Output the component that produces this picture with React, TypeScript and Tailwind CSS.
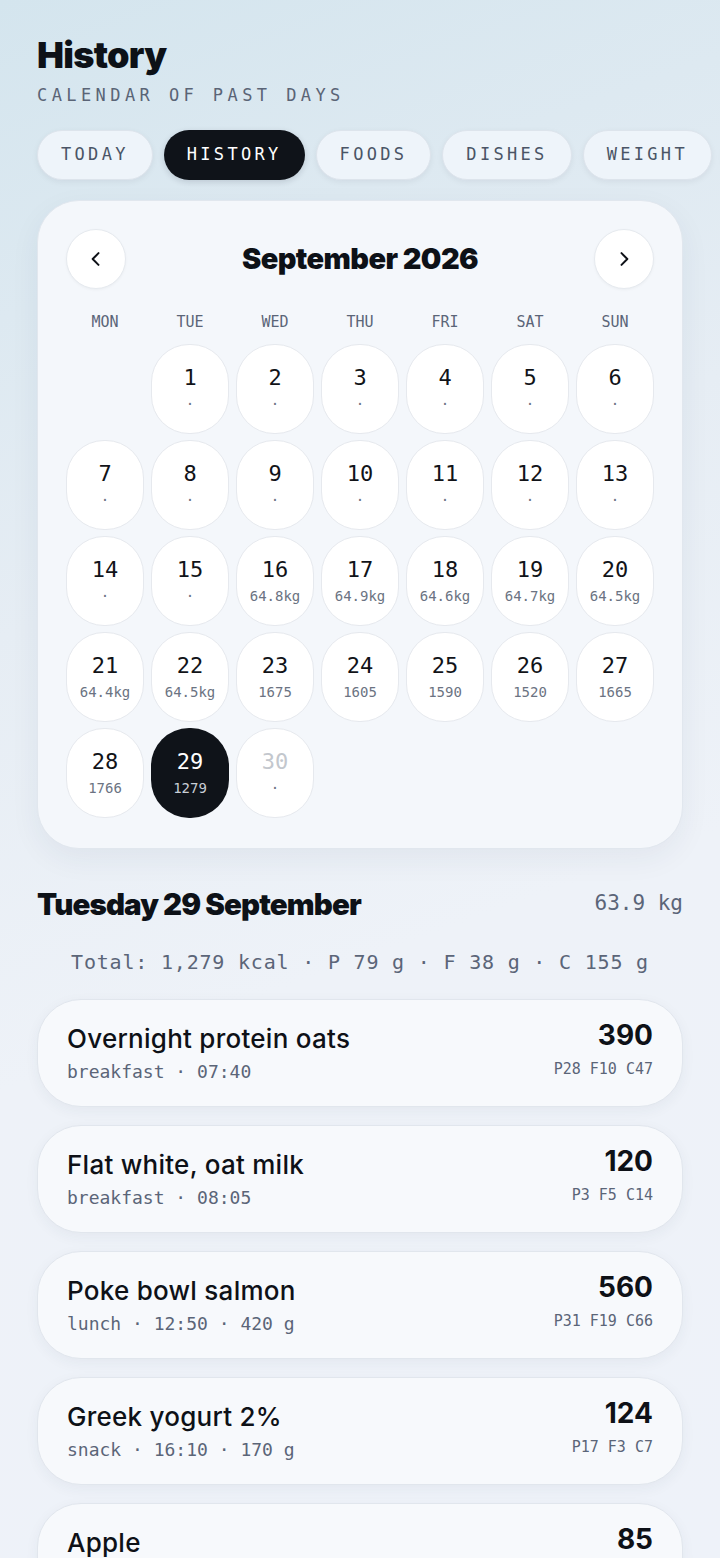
import React from "react";

const mono = { fontFamily: '"DejaVu Sans Mono", "Liberation Mono", monospace' };
const sans = { fontFamily: 'Inter, "Noto Sans", sans-serif' };

type Day = { d: number; sub: string; selected?: boolean; future?: boolean } | null;

const days: Day[] = [
  null,
  { d: 1, sub: "·" },
  { d: 2, sub: "·" },
  { d: 3, sub: "·" },
  { d: 4, sub: "·" },
  { d: 5, sub: "·" },
  { d: 6, sub: "·" },
  { d: 7, sub: "·" },
  { d: 8, sub: "·" },
  { d: 9, sub: "·" },
  { d: 10, sub: "·" },
  { d: 11, sub: "·" },
  { d: 12, sub: "·" },
  { d: 13, sub: "·" },
  { d: 14, sub: "·" },
  { d: 15, sub: "·" },
  { d: 16, sub: "64.8kg" },
  { d: 17, sub: "64.9kg" },
  { d: 18, sub: "64.6kg" },
  { d: 19, sub: "64.7kg" },
  { d: 20, sub: "64.5kg" },
  { d: 21, sub: "64.4kg" },
  { d: 22, sub: "64.5kg" },
  { d: 23, sub: "1675" },
  { d: 24, sub: "1605" },
  { d: 25, sub: "1590" },
  { d: 26, sub: "1520" },
  { d: 27, sub: "1665" },
  { d: 28, sub: "1766" },
  { d: 29, sub: "1279", selected: true },
  { d: 30, sub: "·", future: true },
];

const foods = [
  { name: "Overnight protein oats", meta: "breakfast · 07:40", kcal: "390", macros: "P28 F10 C47" },
  { name: "Flat white, oat milk", meta: "breakfast · 08:05", kcal: "120", macros: "P3 F5 C14" },
  { name: "Poke bowl salmon", meta: "lunch · 12:50 · 420 g", kcal: "560", macros: "P31 F19 C66" },
  { name: "Greek yogurt 2%", meta: "snack · 16:10 · 170 g", kcal: "124", macros: "P17 F3 C7" },
  { name: "Apple", meta: "snack · 17:30 · 160 g", kcal: "85", macros: "P0 F0 C22" },
];

const tabs = ["TODAY", "HISTORY", "FOODS", "DISHES", "WEIGHT", "GOALS"];

export default function App() {
  return (
    <div
      className="w-[720px] h-[1558px] overflow-hidden bg-[linear-gradient(160deg,#d4e5ee_0%,#e6edf4_35%,#eef2f8_60%,#eef2f9_100%)] text-[#0e1117]"
      style={sans}
    >
      <div className="pl-[37px] pr-[37px] pt-[35px]">
        <h1 className="text-[36px] leading-[40px] font-black tracking-[-0.02em] text-[#0d1117]">History</h1>
        <div className="mt-[9px] text-[17px] leading-[22px] tracking-[0.26em] text-[#5a6476]" style={mono}>
          CALENDAR OF PAST DAYS
        </div>

        <div className="mt-[24px] flex gap-[11px] w-[780px]">
          {tabs.map((t) => (
            <div
              key={t}
              className={
                t === "HISTORY"
                  ? "shrink-0 h-[50px] px-[23px] flex items-center rounded-full bg-[#0f1319] text-white text-[17px] tracking-[0.195em] shadow-[0_2px_6px_rgba(15,23,42,0.15)]"
                  : "shrink-0 h-[50px] px-[23px] flex items-center rounded-full bg-[#eef4fa] border border-[#dde4ec] text-[#4a5466] text-[17px] tracking-[0.195em] shadow-[0_2px_6px_rgba(15,23,42,0.06)]"
              }
              style={mono}
            >
              {t}
            </div>
          ))}
        </div>

        <div className="mt-[20px] rounded-[42px] bg-[#f4f7fb] border border-[#e1e7ee] shadow-[0_10px_30px_rgba(30,50,80,0.06)] px-[28px] pt-[28px] pb-[30px]">
          <div className="flex items-center justify-between">
            <button className="w-[60px] h-[60px] rounded-full bg-white border border-[#e6eaef] flex items-center justify-center shadow-[0_1px_3px_rgba(0,0,0,0.04)]">
              <svg width="20" height="20" viewBox="0 0 24 24" fill="none" stroke="#0e1117" strokeWidth="2.4" strokeLinecap="round" strokeLinejoin="round">
                <path d="M15 5l-7 7 7 7" />
              </svg>
            </button>
            <div className="text-[29px] font-black tracking-[-0.02em] text-[#0d1117]">September 2026</div>
            <button className="w-[60px] h-[60px] rounded-full bg-white border border-[#e6eaef] flex items-center justify-center shadow-[0_1px_3px_rgba(0,0,0,0.04)]">
              <svg width="20" height="20" viewBox="0 0 24 24" fill="none" stroke="#0e1117" strokeWidth="2.4" strokeLinecap="round" strokeLinejoin="round">
                <path d="M9 5l7 7-7 7" />
              </svg>
            </button>
          </div>

          <div className="mt-[23px] grid grid-cols-7 gap-x-[7px] text-center text-[15px] leading-[20px] text-[#5b6578]" style={mono}>
            {["MON", "TUE", "WED", "THU", "FRI", "SAT", "SUN"].map((w) => (
              <div key={w}>{w}</div>
            ))}
          </div>

          <div className="mt-[12px] grid grid-cols-7 gap-x-[7px] gap-y-[6px]" style={mono}>
            {days.map((day, i) =>
              day === null ? (
                <div key={i} className="h-[90px]" />
              ) : (
                <div
                  key={i}
                  className={
                    day.selected
                      ? "h-[90px] rounded-[38px] bg-[#0f1319] flex flex-col items-center justify-center gap-[4px]"
                      : "h-[90px] rounded-[38px] bg-white border border-[#e6e9ee] flex flex-col items-center justify-center gap-[4px]"
                  }
                >
                  <div
                    className={
                      day.selected
                        ? "text-[22px] leading-[26px] text-white"
                        : day.future
                        ? "text-[22px] leading-[26px] text-[#c3c7cd]"
                        : "text-[22px] leading-[26px] text-[#111318]"
                    }
                  >
                    {day.d}
                  </div>
                  <div className={day.selected ? "text-[14px] leading-[18px] text-[#c9ced6]" : "text-[14px] leading-[18px] text-[#6b7382]"}>
                    {day.sub}
                  </div>
                </div>
              )
            )}
          </div>
        </div>

        <div className="mt-[38px] flex items-center justify-between">
          <div className="text-[29.5px] leading-[34px] font-black tracking-[-0.03em] text-[#0d1117]">Tuesday 29 September</div>
          <div className="text-[21px] text-[#5b6578]" style={mono}>63.9 kg</div>
        </div>

        <div className="mt-[28px] text-center text-[20px] leading-[26px] tracking-[0.04em] text-[#5b6578]" style={mono}>
          Total: 1,279 kcal · P 79 g · F 38 g · C 155 g
        </div>

        <div className="mt-[24px] flex flex-col gap-[18px]">
          {foods.map((f) => (
            <div
              key={f.name}
              className="h-[108px] rounded-[44px] bg-[#f7f9fc] border border-[#e1e6ed] shadow-[0_4px_14px_rgba(30,50,80,0.05)] px-[29px] flex items-center justify-between"
            >
              <div className="flex flex-col">
                <div className="text-[26px] leading-[30px] font-medium tracking-[0.01em] text-[#0e1117]">{f.name}</div>
                <div className="mt-[7px] text-[18px] leading-[22px] text-[#5b6578]" style={mono}>{f.meta}</div>
              </div>
              <div className="flex flex-col items-end mb-[8px]">
                <div className="text-[28px] leading-[32px] font-bold text-[#0e1117]">{f.kcal}</div>
                <div className="mt-[8px] text-[15px] leading-[20px] text-[#5b6578]" style={mono}>{f.macros}</div>
              </div>
            </div>
          ))}
        </div>
      </div>
    </div>
  );
}
